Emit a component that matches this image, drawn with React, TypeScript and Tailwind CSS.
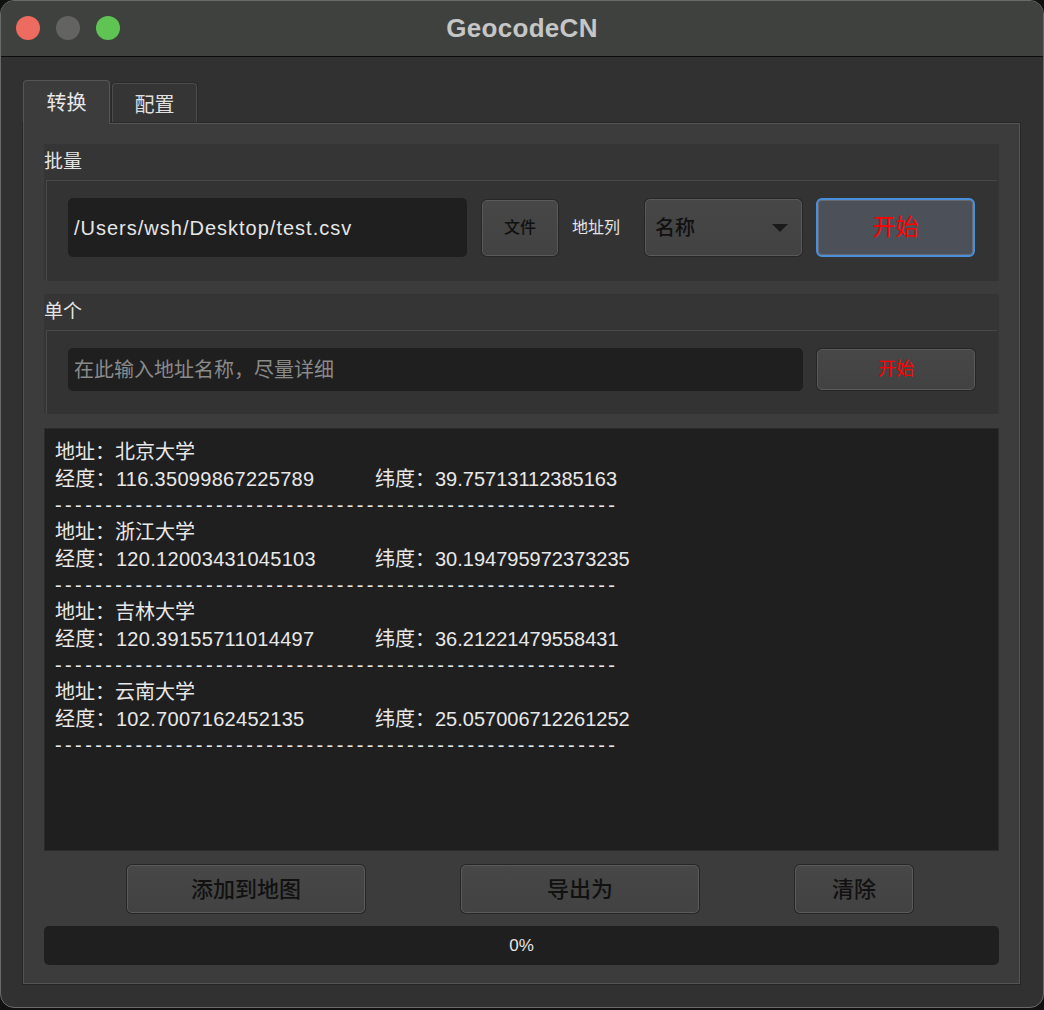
import React from "react"

const results = [
	{ name: "北京大学", lng: "116.35099867225789", lat: "39.75713112385163" },
	{ name: "浙江大学", lng: "120.12003431045103", lat: "30.194795972373235" },
	{ name: "吉林大学", lng: "120.39155711014497", lat: "36.21221479558431" },
	{ name: "云南大学", lng: "102.7007162452135", lat: "25.057006712261252" },
]

const dashes = "-".repeat(56)

const btn = "rounded-[5px] border border-[#5a5a5a] shadow-[0_0_0_1px_#262626] bg-gradient-to-b from-[#474747] to-[#424242]"

export default function App() {
	return (
		<div className="w-[1044px] h-[1010px] bg-[#111] font-['Liberation_Sans','Noto_Sans_CJK_SC',sans-serif]">
			<div className="w-[1044px] h-[1008px] rounded-[14px] border border-[#6a6a6a] bg-[#313131] overflow-hidden flex flex-col">
				{/* Title bar */}
				<div className="relative h-[56px] shrink-0 bg-[#3f413e] border-b border-[#0c0c0c] flex items-center justify-center">
					<div className="absolute left-[15px] top-[15px] flex gap-[16px]">
						<span className="w-[24px] h-[24px] rounded-full bg-[#ee6b60]" />
						<span className="w-[24px] h-[24px] rounded-full bg-[#636462]" />
						<span className="w-[24px] h-[24px] rounded-full bg-[#5fc454]" />
					</div>
					<span className="text-[26px] font-bold tracking-[0.3px] text-[#c6c6c6]">GeocodeCN</span>
				</div>

				{/* Body */}
				<div className="pt-[23px] pl-[21px] pr-[22px]">
					{/* Tabs */}
					<div className="flex items-start h-[42px]">
						<div className="relative z-10 ml-[1px] w-[87px] h-[44px] rounded-t-[4px] border border-b-0 border-[#555] bg-[#3c3c3c] flex items-center justify-center text-[20px] text-[#e8e8e8]">
							转换
						</div>
						<div className="ml-[2px] mt-[3px] w-[85px] h-[39px] rounded-t-[4px] border border-b-0 border-[#4c4c4c] shadow-[0_0_0_1px_#2a2a2a] bg-[#353535] flex items-center justify-center text-[20px] text-[#e0e0e0]">
							<span className="mt-[3px]">配置</span>
						</div>
					</div>

					{/* Pane */}
					<div className="border border-[#262626]">
						<div className="border border-[#545454] bg-[#3c3c3c] pt-[20px] pl-[20px] pr-[20px] pb-[18px]">
							{/* Batch group */}
							<div className="bg-[#353535] px-[2px]">
								<div className="h-[36px] -mx-[2px] flex items-center text-[19px] text-[#e4e4e4]">批量</div>
								<div className="h-[101px] border-t border-l border-[#484848] bg-[#333] flex items-start pt-[17px] pl-[21px]">
									<div className="w-[399px] h-[59px] rounded-[5px] bg-[#1f1f1f] flex items-center pl-[6px] text-[20px] tracking-[1px] text-[#e6e6e6]">
										/Users/wsh/Desktop/test.csv
									</div>
									<button className={`ml-[15px] mt-[2px] w-[76px] h-[56px] ${btn} text-[16px] font-medium text-[#111]`}>
										文件
									</button>
									<span className="ml-[14px] h-[59px] flex items-center text-[16px] text-[#e4e4e4]">地址列</span>
									<div className={`ml-[25px] mt-[1px] w-[157px] h-[57px] ${btn} flex items-center pl-[9px] pr-[13px] justify-between`}>
										<span className="text-[20px] font-medium text-[#111]">名称</span>
										<svg width="16" height="8" viewBox="0 0 16 8">
											<path d="M0 0 L16 0 L8 8 Z" fill="#1a1a1a" />
										</svg>
									</div>
									<button className="ml-[14px] w-[159px] h-[59px] rounded-[6px] border-2 border-[#4a8fdc] bg-[#4c5058] shadow-[inset_0_0_0_1px_#676b71] text-[23px] text-[#ff0000]">
										开始
									</button>
								</div>
							</div>

							{/* Single group */}
							<div className="mt-[13px] bg-[#353535] px-[2px]">
								<div className="h-[36px] -mx-[2px] flex items-center text-[19px] text-[#e4e4e4]">单个</div>
								<div className="h-[84px] border-t border-l border-[#484848] bg-[#333] flex items-start pt-[17px] pl-[21px]">
									<div className="w-[735px] h-[43px] rounded-[5px] bg-[#1f1f1f] flex items-center pl-[6px] text-[20px] text-[#8a8a8a]">
										在此输入地址名称，尽量详细
									</div>
									<button className={`ml-[14px] mt-[1px] w-[158px] h-[41px] ${btn} text-[18px] text-[#ff0000]`}>
										开始
									</button>
								</div>
							</div>

							{/* Output */}
							<div className="mt-[14px] h-[423px] border border-[#2b2b2b] bg-[#1f1f1f] pt-[10px] pl-[10px] text-[20px] leading-[26.67px] text-[#e8e8e8] overflow-hidden">
								{results.map((r) => (
									<div key={r.name}>
										<div>地址：{r.name}</div>
										<div className="flex">
											<span className="w-[320px] shrink-0 tracking-[0.3px]">经度：{r.lng}</span>
											<span>纬度：{r.lat}</span>
										</div>
										<div className="tracking-[3.4px] whitespace-nowrap">{dashes}</div>
									</div>
								))}
							</div>

							{/* Actions */}
							<div className="mt-[14px] h-[48px] flex justify-between pl-[83px] pr-[86px]">
								<button className={`w-[238px] h-[48px] ${btn} text-[22px] font-medium text-[#111]`}>
									添加到地图
								</button>
								<button className={`w-[238px] h-[48px] ${btn} text-[22px] font-medium text-[#111]`}>
									导出为
								</button>
								<button className={`w-[118px] h-[48px] ${btn} text-[22px] font-medium text-[#111]`}>
									清除
								</button>
							</div>

							{/* Progress */}
							<div className="mt-[13px] h-[39px] rounded-[5px] bg-[#1f1f1f] flex items-center justify-center text-[17px] text-[#e6e6e6]">
								0%
							</div>
						</div>
					</div>
				</div>
			</div>
		</div>
	)
}
